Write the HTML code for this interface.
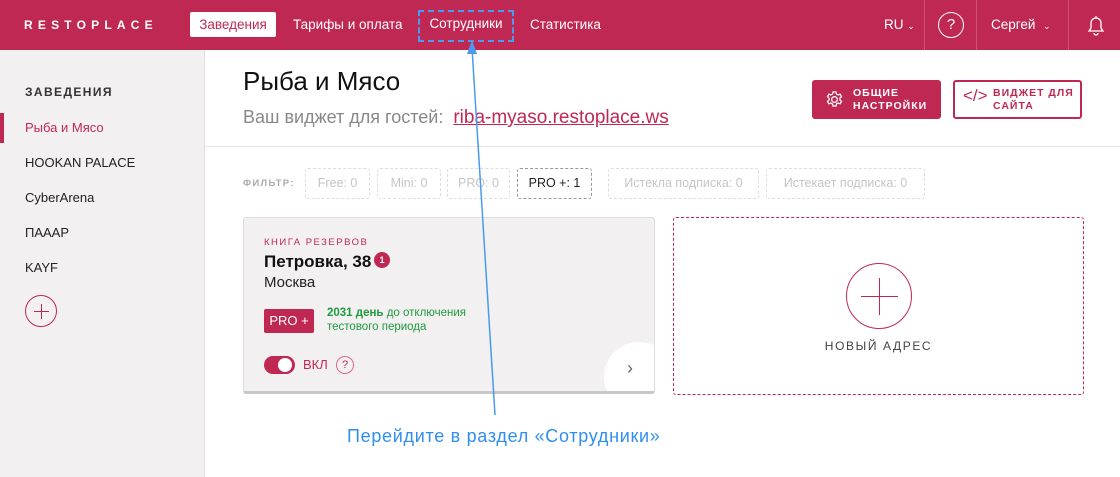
<!DOCTYPE html><html><head><meta charset="utf-8"><style>
*{box-sizing:border-box;margin:0;padding:0}
body{width:1120px;height:477px;overflow:hidden;font-family:"Liberation Sans",sans-serif;background:#fff;position:relative;color:#222}
.hdr{position:absolute;left:0;top:0;width:1120px;height:50px;background:#c02854;color:#fff}
.logo{position:absolute;left:24px;top:18px;font-size:12px;font-weight:bold;letter-spacing:5.2px}
.nav{position:absolute;top:12px;font-size:13.5px;height:25px;line-height:25px;padding:0 9px}
.sep{position:absolute;top:0;width:1px;height:50px;background:rgba(255,255,255,.2)}
.side{position:absolute;left:0;top:50px;width:205px;height:427px;background:#f2f0f1;border-right:1px solid #e2dfe0}
.side .t{position:absolute;left:25px;top:35px;font-size:12px;font-weight:bold;letter-spacing:1.4px;color:#333}
.side .i{position:absolute;left:25px;font-size:13px;color:#222}
.f{position:absolute;top:168px;height:31px;line-height:29px;border:1px dashed #ddd;border-radius:3px;font-size:12.5px;color:#c5c5c5;text-align:center}
</style></head><body>
<div class="hdr">
<div class="logo">RESTOPLACE</div>
<div class="nav" style="left:190px;background:#fff;color:#c02854;border-radius:2px;width:86px;text-align:center;padding:0">Заведения</div>
<div class="nav" style="left:284px">Тарифы и оплата</div>
<div class="nav" style="left:418px;border:2px dashed #4a9af0;line-height:24px;top:10px;height:32px;width:96px;padding:0;text-align:center">Сотрудники</div>
<div class="nav" style="left:521px">Статистика</div>
<div class="nav" style="left:875px">RU <span style="font-size:9px">&#8964;</span></div>
<div class="sep" style="left:924px"></div>
<div style="position:absolute;left:938px;top:12px;width:26px;height:26px;border:1.3px solid #fff;border-radius:50%;text-align:center;line-height:24px;font-size:15px">?</div>
<div class="sep" style="left:976px"></div>
<div class="nav" style="left:982px">Сергей &nbsp;<span style="font-size:9px">&#8964;</span></div>
<div class="sep" style="left:1068px"></div>
<svg style="position:absolute;left:1085px;top:14px" width="22" height="22" viewBox="0 0 22 22" fill="none" stroke="#fff" stroke-width="1.3"><path d="M4 17h14l-2-3v-5a5 5 0 0 0-10 0v5z M9 19a2 2 0 0 0 4 0 M11 2v2"/></svg>
</div>
<div class="side">
<div class="t">ЗАВЕДЕНИЯ</div>
<div style="position:absolute;left:0;top:63px;width:4px;height:30px;background:#c02854"></div>
<div class="i" style="top:70px;color:#c02854">Рыба и Мясо</div>
<div class="i" style="top:105px">HOOKAN PALACE</div>
<div class="i" style="top:140px">CyberArena</div>
<div class="i" style="top:175px">ПАААР</div>
<div class="i" style="top:210px">KAYF</div>
<div style="position:absolute;left:25px;top:245px;width:32px;height:32px;border:1px solid #c02854;border-radius:50%"><div style="position:absolute;left:15px;top:8px;width:1px;height:15px;background:#c02854"></div><div style="position:absolute;left:8px;top:15px;width:15px;height:1px;background:#c02854"></div></div>
</div>
<div style="position:absolute;left:205px;top:146px;width:915px;height:1px;background:#e6e6e6"></div>
<div style="position:absolute;left:243px;top:66px;font-size:26px;color:#111">Рыба и Мясо</div>
<div style="position:absolute;left:243px;top:107px;font-size:18px;color:#888">Ваш виджет для гостей: &nbsp;<span style="color:#c02854;text-decoration:underline;font-size:19px">riba-myaso.restoplace.ws</span></div>
<div style="position:absolute;left:812px;top:80px;width:129px;height:39px;background:#c02854;border-radius:3px;color:#fff;font-size:10.5px;font-weight:bold;letter-spacing:1px;line-height:13px;padding:7px 0 0 41px">ОБЩИЕ<br>НАСТРОЙКИ
<svg style="position:absolute;left:13px;top:10px" width="19" height="19" viewBox="0 0 20 20" fill="none" stroke="#fff" stroke-width="1.3"><circle cx="10" cy="10" r="3"/><path d="M8.5 2h3l.5 2.2 1.8 1 2.1-.8 1.5 2.6-1.7 1.5v2l1.7 1.5-1.5 2.6-2.1-.8-1.8 1-.5 2.2h-3l-.5-2.2-1.8-1-2.1.8-1.5-2.6 1.7-1.5v-2L2.6 7l1.5-2.6 2.1.8 1.8-1z"/></svg></div>
<div style="position:absolute;left:953px;top:80px;width:129px;height:39px;border:2px solid #c02854;border-radius:3px;color:#c02854;font-size:10.5px;font-weight:bold;letter-spacing:1px;line-height:13px;padding:5px 0 0 38px">ВИДЖЕТ ДЛЯ<br>САЙТА<span style="position:absolute;left:8px;top:7px;font-size:17px;font-weight:normal;letter-spacing:0">&lt;/&gt;</span></div>
<div style="position:absolute;left:243px;top:178px;font-size:9.5px;font-weight:bold;letter-spacing:1.3px;color:#aaa">ФИЛЬТР:</div>
<div class="f" style="left:305px;width:65px">Free: 0</div>
<div class="f" style="left:377px;width:64px">Mini: 0</div>
<div class="f" style="left:447px;width:63px">PRO: 0</div>
<div class="f" style="left:517px;width:75px;border-color:#999;color:#222">PRO +: 1</div>
<div class="f" style="left:608px;width:151px">Истекла подписка: 0</div>
<div class="f" style="left:766px;width:159px">Истекает подписка: 0</div>
<div style="position:absolute;left:243px;top:217px;width:412px;height:177px;background:#f2f0f1;border:1px solid #ddd;border-bottom:3px solid #c8c8c8;border-radius:3px;overflow:hidden">
<div style="position:absolute;left:20px;top:19px;font-size:9.5px;letter-spacing:1.5px;color:#c02854">КНИГА РЕЗЕРВОВ</div>
<div style="position:absolute;left:20px;top:34px;font-size:17px;font-weight:bold;color:#111">Петровка, 38</div>
<div style="position:absolute;left:130px;top:34px;width:16px;height:16px;background:#c02854;border-radius:50%;color:#fff;font-size:9px;font-weight:bold;text-align:center;line-height:16px">1</div>
<div style="position:absolute;left:20px;top:56px;font-size:15px;color:#222">Москва</div>
<div style="position:absolute;left:20px;top:91px;width:50px;height:24px;background:#c02854;border-radius:2px;color:#fff;font-size:13px;text-align:center;line-height:24px">PRO +</div>
<div style="position:absolute;left:83px;top:88px;font-size:11.5px;color:#1f9a3e;line-height:14px"><b>2031 день</b> до отключения<br>тестового периода</div>
<div style="position:absolute;left:20px;top:138px;width:31px;height:18px;background:#c02854;border-radius:9px"><div style="position:absolute;right:3px;top:2px;width:14px;height:14px;background:#fff;border-radius:50%"></div></div>
<div style="position:absolute;left:59px;top:139px;font-size:13px;color:#c02854">ВКЛ</div>
<div style="position:absolute;left:92px;top:138px;width:18px;height:18px;border:1px solid #d86a8a;border-radius:50%;color:#c02854;font-size:11px;text-align:center;line-height:16px">?</div>
<div style="position:absolute;left:360px;top:124px;width:70px;height:70px;background:#fff;border-radius:50%;color:#666;font-size:18px;padding:16px 0 0 23px">›</div>
</div>
<div style="position:absolute;left:673px;top:217px;width:411px;height:178px;border:1px dashed #c02854;border-radius:3px">
<div style="position:absolute;left:172px;top:45px;width:66px;height:66px;border:1px solid #c02854;border-radius:50%"><div style="position:absolute;left:32px;top:14px;width:1px;height:37px;background:#c02854"></div><div style="position:absolute;left:14px;top:32px;width:37px;height:1px;background:#c02854"></div></div>
<div style="position:absolute;left:0;width:100%;top:121px;text-align:center;font-size:12px;letter-spacing:1.6px;color:#444">НОВЫЙ АДРЕС</div>
</div>
<svg style="position:absolute;left:0;top:0" width="1120" height="477"><line x1="495" y1="415" x2="472" y2="48" stroke="#4a9af0" stroke-width="1.5"/><path d="M472 40 L467 54 L477 54 Z" fill="#4a9af0"/></svg>
<div style="position:absolute;left:347px;top:426px;font-size:18px;letter-spacing:0.7px;color:#2f8ff0">Перейдите в раздел «Сотрудники»</div>
</body></html>
